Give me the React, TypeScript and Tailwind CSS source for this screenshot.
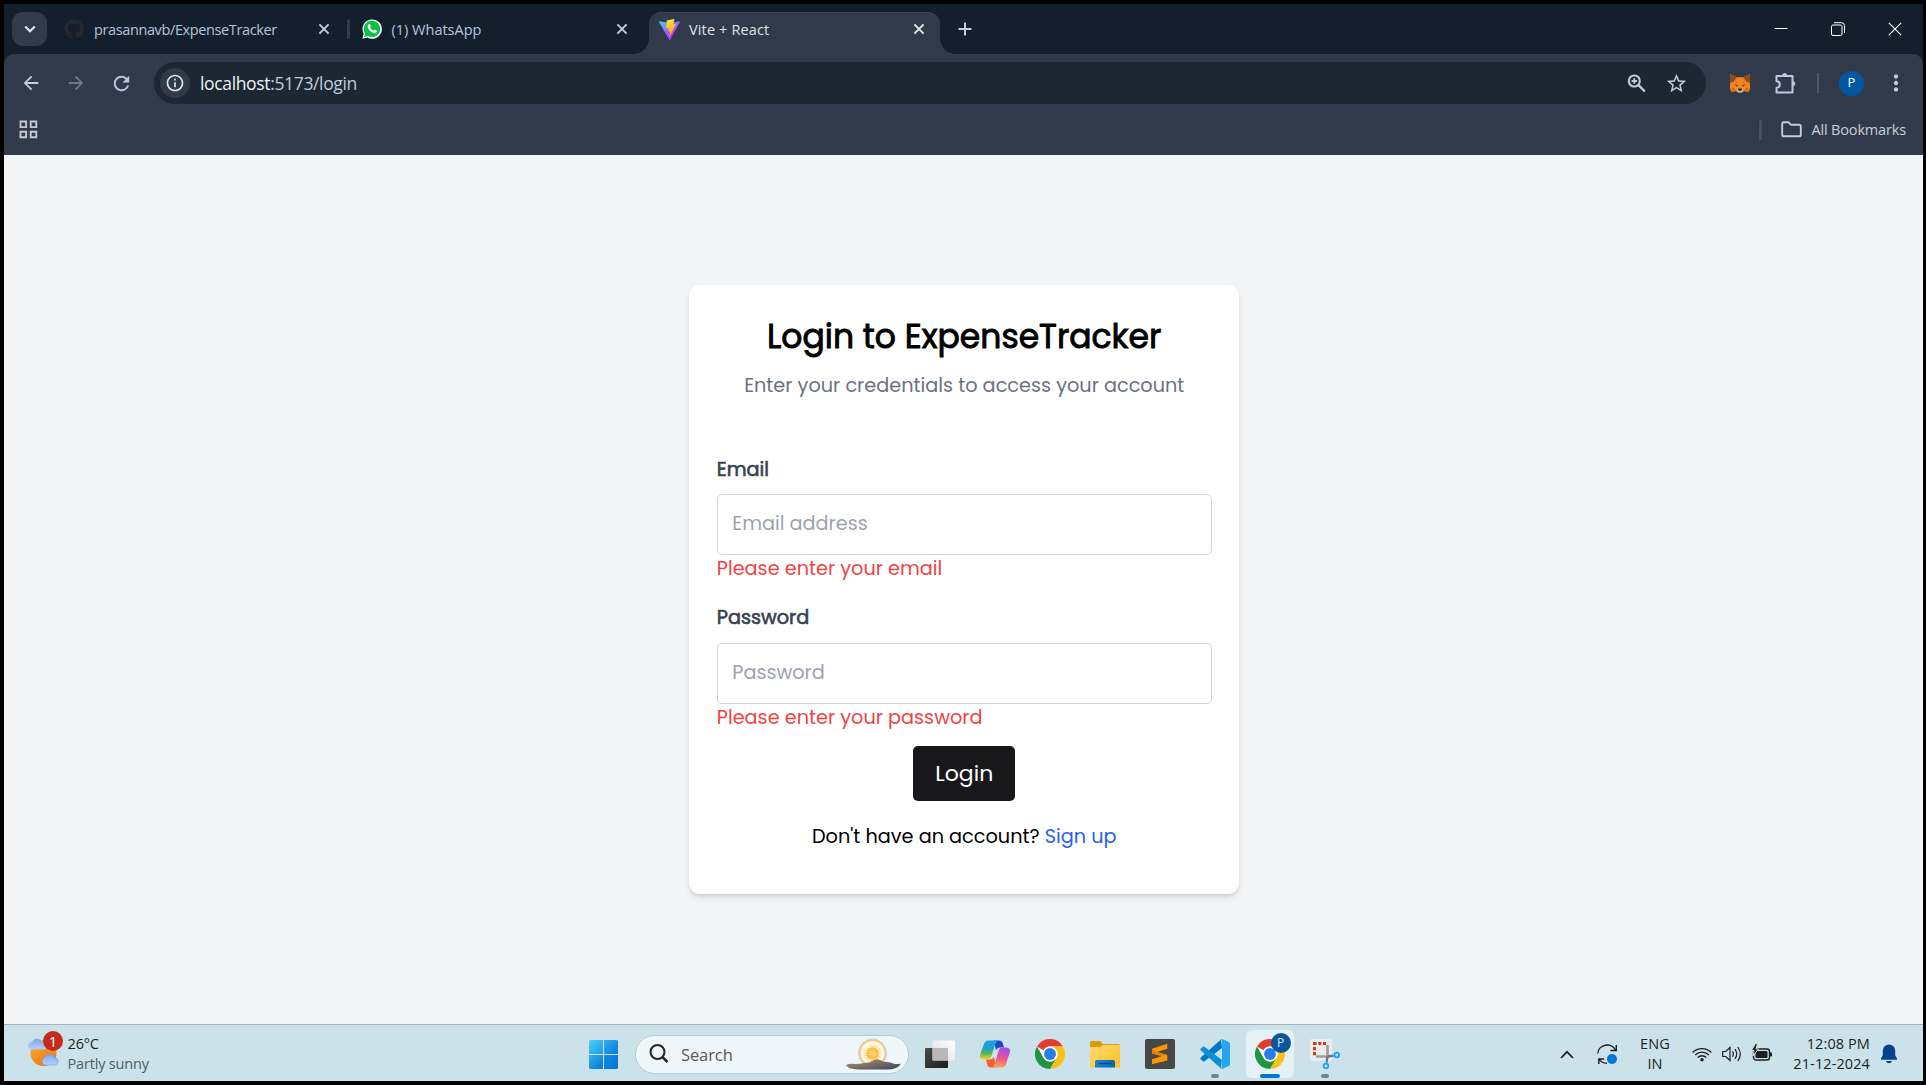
import React from "react";
import {
  MdArrowBack,
  MdArrowForward,
  MdRefresh,
  MdInfoOutline,
  MdStarBorder,
  MdMoreVert,
} from "react-icons/md";
import { FaGithub } from "react-icons/fa";

const CloseX = ({ color }: { color: string }) => (
  <svg className="size-4 shrink-0" viewBox="0 0 16 16" fill="none" stroke={color} strokeWidth="1.9">
    <path d="M3.4 3.4l9.2 9.2M12.6 3.4l-9.2 9.2" />
  </svg>
);

const ZoomInIcon = () => (
  <svg className="size-[23px]" viewBox="0 0 23 23" fill="none" stroke="#c6cad2" strokeWidth="2.100">
    <circle cx="9.300" cy="9" r="5.500" />
    <path d="M13.500 13.200l6.300 6.300" strokeWidth="2.400" />
    <path d="M9.300 6.200v5.600M6.500 9h5.600" strokeWidth="1.900" />
  </svg>
);

const WhatsAppIcon = () => (
  <svg className="size-5 shrink-0" viewBox="0 0 20 20">
    <path d="M.3 19.8l1.4-5A9.7 9.7 0 1 1 5.300 18.500z" fill="#f4fbf5" />
    <path d="M2 18.100l1.100-3.700A8.200 8.200 0 1 1 5.900 17z" fill="#0fc143" />
    <path
      d="M6.900 5.200c.5-.3 1-.1 1.200.3l.7 1.600c.1.300 0 .6-.7 1.400.8 1.500 1.900 2.500 3.500 3.200.6-.8.9-1.100 1.300-.9l1.700.8c.4.2.5.4.3 1-.3 1.100-1.400 1.700-2.400 1.600-3-.4-6.300-3.500-6.800-6.200-.200-1.200.4-2.400 1.200-2.800z"
      fill="#fff"
    />
  </svg>
);

const ViteIcon = () => (
  <svg className="size-[21px] shrink-0" viewBox="0 0 256 257">
    <defs>
      <linearGradient id="viteBody" x1="-.8%" x2="57.600%" y1="7.700%" y2="78.400%">
        <stop offset="0%" stopColor="#41D1FF" />
        <stop offset="100%" stopColor="#BD34FE" />
      </linearGradient>
      <linearGradient id="viteBolt" x1="43.400%" x2="50.300%" y1="2.200%" y2="89%">
        <stop offset="0%" stopColor="#FFEA83" />
        <stop offset="8.300%" stopColor="#FFDD35" />
        <stop offset="100%" stopColor="#FFA800" />
      </linearGradient>
    </defs>
    <path
      fill="url(#viteBody)"
      d="M255.153 37.938L134.897 252.976c-2.483 4.440-8.862 4.466-11.382.048L.875 37.958c-2.746-4.814 1.371-10.646 6.827-9.670l120.385 21.517a6.537 6.537 0 0 0 2.322-.004l117.867-21.483c5.438-.991 9.574 4.796 6.877 9.620z"
    />
    <path
      fill="url(#viteBolt)"
      d="M185.432.063L96.440 17.501a3.268 3.268 0 0 0-2.634 3.014l-5.474 92.456a3.268 3.268 0 0 0 3.997 3.378l24.777-5.718c2.318-.535 4.413 1.507 3.936 3.838l-7.361 36.047c-.495 2.426 1.782 4.500 4.151 3.780l15.304-4.649c2.372-.720 4.652 1.360 4.150 3.788l-11.698 56.621c-.732 3.542 3.979 5.473 5.943 2.437l1.313-2.028 72.516-144.720c1.215-2.423-.880-5.186-3.540-4.672l-25.505 4.922c-2.396.462-4.435-1.770-3.759-4.114l16.646-57.705c.677-2.350-1.370-4.583-3.769-4.113z"
    />
  </svg>
);

const FoxIcon = () => (
  <svg className="h-[20px] w-[22px]" viewBox="0 0 22 20">
    <path d="M1 .8l6.500 3.400h7L21 .8V15l-1.300 4-4.700-.8-2 1H9l-2-1-4.700.8L1 15z" fill="#f5841f" />
    <path d="M1 .8l6.500 3.400L5 8.500.9 10zM21 .8l-6.500 3.400L17 8.500l4.100 1.500z" fill="#8f4a1d" />
    <path d="M5 8.500l2.700-4L9 13l-3-2zM17 8.500l-2.700-4L13 13l3-2z" fill="#ed7a1c" />
    <path d="M5.500 11.500l3.200.8-.4 1.700zM16.500 11.500l-3.200.8.4 1.700z" fill="#5f3a25" />
    <path d="M1 15h4.800L7 17.500l-4.700 1.400zM21 15h-4.800L15 17.500l4.700 1.400z" fill="#e0701a" />
    <path d="M7.800 16.300l1.400-1h3.600l1.400 1-1 3.200H8.800z" fill="#cfc3b7" />
    <path d="M8.800 15.500h4.400l-.8 2.200H9.600z" fill="#1c1c22" />
  </svg>
);

const PuzzleIcon = () => (
  <svg className="size-[22px]" viewBox="0 0 22 22" fill="none" stroke="#b9cae2" strokeWidth="2" strokeLinejoin="round">
    <path d="M2.500 4h16v16.500h-16v-4.800c4.400 0 4.400-6.400 0-6.400z" />
    <path d="M8.500 3.500a2.200 2.200 0 0 1 4.400 0zM18.800 9.500a2.200 2.200 0 0 1 0 4.400z" fill="#b9cae2" strokeWidth="0.6" />
  </svg>
);

const FolderOutline = () => (
  <svg className="h-[17px] w-[21px]" viewBox="0 0 21 17" fill="none" stroke="#c6cad2" strokeWidth="1.900" strokeLinejoin="round">
    <path d="M1.200 2.800q0-1.600 1.600-1.600H7.500l2.300 2.500h8.400q1.600 0 1.600 1.600v8.400q0 1.600-1.600 1.600H2.800q-1.600 0-1.600-1.600z" />
  </svg>
);

const AppsIcon = () => (
  <svg className="size-[19px]" viewBox="0 0 19 19" fill="none" stroke="#c8c6d0" strokeWidth="1.900">
    <path d="M1.500 1.500h5.600v5.600H1.500zM11.700 1.500h5.600v5.600h-5.600zM1.500 11.700h5.600v5.600H1.500zM11.700 11.700h5.600v5.600h-5.600z" />
  </svg>
);

const WeatherIcon = () => (
  <svg className="size-8" viewBox="0 0 32 32">
    <defs>
      <linearGradient id="sunDisc" x1="0" y1="0" x2="0.600" y2="1">
        <stop offset="0" stopColor="#f5b62e" />
        <stop offset="1" stopColor="#f2761b" />
      </linearGradient>
      <linearGradient id="cloud" x1="0" y1="0" x2="0" y2="1">
        <stop offset="0" stopColor="#7fa6ee" />
        <stop offset="1" stopColor="#b5cffa" />
      </linearGradient>
    </defs>
    <circle cx="15.500" cy="16" r="13" fill="url(#sunDisc)" />
    <path d="M3.500 12.500a3.600 3.600 0 0 1 .4-7.200 5.500 5.500 0 0 1 10.200 0 3.600 3.600 0 0 1 1.900 7.200z" fill="url(#cloud)" />
    <path d="M16.500 28a4 4 0 0 1 .2-7.500 5.400 5.400 0 0 1 10 .3A3.700 3.700 0 0 1 27.500 28z" fill="url(#cloud)" stroke="#6b93e0" strokeWidth="0.600" />
  </svg>
);

const WindowsIcon = () => (
  <svg className="size-[29px]" viewBox="0 0 29 29">
    <defs>
      <linearGradient id="winPane" gradientUnits="userSpaceOnUse" x1="0" y1="0" x2="29" y2="29">
        <stop offset="0" stopColor="#4fd3fb" />
        <stop offset="0.600" stopColor="#0f87dc" />
        <stop offset="1" stopColor="#0274d3" />
      </linearGradient>
    </defs>
    <path d="M1.500 0H14v14H0V1.500Q0 0 1.500 0zM15 0h12.500Q29 0 29 1.500V14H15zM0 15h14v14H1.500Q0 29 0 27.500zM15 15h14v12.500q0 1.500-1.500 1.500H15z" fill="url(#winPane)" />
  </svg>
);

const SunriseArt = () => (
  <svg className="h-8 w-[55px]" viewBox="0 0 55 32">
    <defs>
      <linearGradient id="hill" x1="0" y1="0" x2="1" y2="1">
        <stop offset="0" stopColor="#8d8478" />
        <stop offset="0.400" stopColor="#8a7466" />
        <stop offset="1" stopColor="#2f4558" />
      </linearGradient>
      <radialGradient id="sunCore">
        <stop offset="0" stopColor="#ffe083" />
        <stop offset="1" stopColor="#ffb52e" />
      </radialGradient>
    </defs>
    <circle cx="26.500" cy="15" r="14" fill="#fdf6e9" stroke="#b9d3de" strokeWidth="1" />
    <circle cx="26.500" cy="15" r="12.700" fill="none" stroke="#fbc27a" strokeWidth="1.500" />
    <circle cx="26.500" cy="15.500" r="7.500" fill="none" stroke="#ffc65c" strokeWidth="2" strokeDasharray="1 1.600" />
    <circle cx="26.500" cy="15.500" r="6.200" fill="url(#sunCore)" />
    <path d="M0 27q4-2 9-1 5 0 9-1 6 0 10-3 3-1.500 6 0 3 2 7 2 4 0 6 1.500 5 1 8 0-3 6-14 6H12Q2 31 0 27z" fill="url(#hill)" />
  </svg>
);

const TaskViewIcon = () => (
  <svg className="size-[30px]" viewBox="0 0 30 30">
    <defs>
      <linearGradient id="tvDark" x1="0" y1="0" x2="1" y2="1">
        <stop offset="0" stopColor="#4b4b4b" />
        <stop offset="1" stopColor="#1c1c1c" />
      </linearGradient>
      <linearGradient id="tvLight" x1="0" y1="1" x2="1" y2="0">
        <stop offset="0" stopColor="#dcdcdc" />
        <stop offset="1" stopColor="#ffffff" />
      </linearGradient>
    </defs>
    <rect x="0" y="9" width="23" height="20" rx="1" fill="url(#tvDark)" />
    <rect x="7.500" y="1.500" width="22.500" height="20" rx="1" fill="url(#tvLight)" />
    <path d="M7.500 9H23v12.500H7.500z" fill="#b9b9b9" />
  </svg>
);

const CopilotIcon = () => (
  <svg className="size-[30px]" viewBox="0 0 30 30">
    <defs>
      <linearGradient id="copA" x1="0" y1="0" x2="0" y2="1">
        <stop offset="0" stopColor="#1b9df0" />
        <stop offset="0.400" stopColor="#1e9fc4" />
        <stop offset="0.700" stopColor="#5cb85a" />
        <stop offset="1" stopColor="#ffd21f" />
      </linearGradient>
      <linearGradient id="copB" x1="0.600" y1="0" x2="0.400" y2="1">
        <stop offset="0" stopColor="#9a4ff0" />
        <stop offset="0.500" stopColor="#ee4f9a" />
        <stop offset="1" stopColor="#ffa14f" />
      </linearGradient>
    </defs>
    <path d="M14 1.500h5q3 0 3.800 3L24 8.500h-4q-3 0-4 3z" fill="#1a45cf" />
    <path d="M16 28.500h-5q-3 0-3.800-3L6 20.500h4q3 0 4-3z" fill="#f0603a" />
    <path d="M8.500 1.500H18q-2 1-3 4.500l-3.500 11q-1 3.500-4 3.500H4q-5 0-3.800-5L4 5q1-3.500 4.500-3.500z" fill="url(#copA)" />
    <path d="M21.500 28.500H12q2-1 3-4.500l3.500-12q1-3.500 4-3.500H26q5 0 3.800 5L26 25q-1 3.500-4.500 3.500z" fill="url(#copB)" />
  </svg>
);

const ChromeIcon = () => (
  <svg className="size-[30px]" viewBox="0 0 48 48">
    <circle cx="24" cy="24" r="23.500" fill="#fff" />
    <path d="M3.200 12A24 24 0 0 1 44.800 12H24a12 12 0 0 0-10.400 6z" fill="#e33b2e" />
    <path d="M44.800 12A24 24 0 0 1 24 48l10.400-18A12 12 0 0 0 24 12z" fill="#fbc116" />
    <path d="M24 48A24 24 0 0 1 3.200 12l10.400 18A12 12 0 0 0 34.400 30z" fill="#229342" />
    <circle cx="24" cy="24" r="12" fill="#fff" />
    <circle cx="24" cy="24" r="9.500" fill="#2a7de9" />
  </svg>
);

const ExplorerIcon = () => (
  <svg className="size-[30px]" viewBox="0 0 30 30">
    <defs>
      <linearGradient id="folderFace" x1="0" y1="0" x2="1" y2="1">
        <stop offset="0" stopColor="#ffdb6e" />
        <stop offset="1" stopColor="#fcbf22" />
      </linearGradient>
      <linearGradient id="folderTray" x1="0" y1="0" x2="1" y2="0">
        <stop offset="0" stopColor="#1486d8" />
        <stop offset="1" stopColor="#0a66b4" />
      </linearGradient>
    </defs>
    <path d="M0 3.500Q0 2 1.500 2H10l3 3h15.500Q30 5 30 6.500V12H0z" fill="#dd9a0d" />
    <path d="M0 8h10l3-2h17v21.500q0 1-1 1H1q-1 0-1-1z" fill="url(#folderFace)" />
    <path d="M5 28.500V23q0-2 2-2h16q2 0 2 2v5.500z" fill="url(#folderTray)" />
    <path d="M8.500 24.500h13" stroke="#064a85" strokeWidth="1.200" />
  </svg>
);

const SublimeIcon = () => (
  <svg className="size-[30px]" viewBox="0 0 30 30">
    <rect width="30" height="30" rx="2" fill="#484848" />
    <path d="M7 9.800l15.300-5v5L12 13l10.300 3.100v5.300L7 25.300v-5L17.300 17 7 14.500z" fill="#ff9800" />
    <path d="M7 14.500v-4.700L12 13l10.300 3.100-5 .9z" fill="#e68200" />
  </svg>
);

const VSCodeIcon = () => (
  <svg className="size-[30px]" viewBox="0 0 30 30">
    <path d="M22 9L4.500 22.300q-.8.600-1.500 0L.8 20.500q-.9-.9 0-1.900L21 .4z" fill="#0078c4" />
    <path d="M22 21L4.500 7.700q-.8-.6-1.500 0L.8 9.500q-.9.900 0 1.900L21 29.600z" fill="#0c8fd8" />
    <path d="M22 0l7 3.100q1 .5 1 1.700v20.400q0 1.200-1 1.700L22 30q-1 .2-1.700-.6 1.700 1 1.700-1.400V2Q22-.3 20.300.6 21-.2 22 0z" fill="#27a4f2" />
  </svg>
);

const SnipIcon = () => (
  <svg className="size-[30px]" viewBox="0 0 30 30">
    <rect x="0" y="0" width="22" height="22" rx="2" fill="#ececee" />
    <path d="M3 3h3.600v3H3zM8.300 3h3v3h-3zM13 3h3v3h-3zM3 8h3v3.300H3zM3 13h3v3.300H3z" fill="#d43d10" />
    <path d="M17.500 6v11M6 17.500h11" stroke="#9a9da1" strokeWidth="2.600" />
    <path d="M17.500 17.500l-.8 5M17.500 17.500l5.500-.8" stroke="#6f757b" strokeWidth="2.400" />
    <circle cx="26.800" cy="16" r="2.300" fill="none" stroke="#1da4e8" strokeWidth="1.800" />
    <circle cx="16" cy="27" r="2.300" fill="none" stroke="#1da4e8" strokeWidth="1.800" />
    <path d="M22 17l3-.5M17 22l-.5 3" stroke="#1da4e8" strokeWidth="1.800" />
  </svg>
);

const TabStrip = () => (
  <div className="flex h-[50px] items-center pl-2">
    <div className="flex h-[34px] w-[35px] items-center justify-center rounded-[11px] bg-[#303b4b]">
      <svg className="size-3" viewBox="0 0 12 12" fill="none" stroke="#e3e6ee" strokeWidth="2.200">
        <path d="M1.200 3.500L6 8.200l4.800-4.700" />
      </svg>
    </div>
    <div className="ml-[17px] flex w-[268px] items-center">
      <FaGithub className="size-5 text-[#25292e]" />
      <span className="ml-2.5 flex-1 pt-px tracking-[-0.380px]">prasannavb/ExpenseTracker</span>
      <CloseX color="#c3cfe0" />
    </div>
    <div className="ml-[15px] h-5 w-[3px] rounded-full bg-[#303b4b]" />
    <div className="ml-3 flex w-[268px] items-center">
      <WhatsAppIcon />
      <span className="ml-[9.500px] flex-1 pt-px">(1) WhatsApp</span>
      <CloseX color="#c3cfe0" />
    </div>
    <div className="ml-1 size-[15px] self-end bg-[radial-gradient(circle_at_top_left,#141f2e_14.500px,#303a4a_15px)]" />
    <div className="flex h-[42px] w-[291px] items-center self-end rounded-t-xl border-t border-[#3a4454] bg-[#303a4a] pr-[13px] pb-[9px] pl-2.5">
      <ViteIcon />
      <span className="ml-[9px] flex-1 pt-px tracking-[0.140px] text-[#dfe2e8]">Vite + React</span>
      <CloseX color="#e6e8ec" />
    </div>
    <div className="size-[15px] self-end bg-[radial-gradient(circle_at_top_right,#141f2e_14.500px,#303a4a_15px)]" />
    <svg className="size-5" viewBox="0 0 20 20" stroke="#c3cfe0" strokeWidth="2">
      <path d="M10 3.500v13M3.500 10h13" />
    </svg>
    <div className="ml-auto flex items-center gap-[43px] pr-[20.500px]">
      <svg className="h-[14px] w-[14px]" viewBox="0 0 14 14" stroke="#fff" strokeWidth="1">
        <path d="M.5 6.500h13" />
      </svg>
      <svg className="h-[14px] w-[14px]" viewBox="0 0 14 14" fill="none" stroke="#fff" strokeWidth="1">
        <rect x="0.500" y="3" width="10.500" height="10.500" rx="1.500" />
        <path d="M3 .7h7.500q3 0 3 3V11" />
      </svg>
      <svg className="h-[14px] w-[14px]" viewBox="0 0 14 14" stroke="#fff" strokeWidth="1.100">
        <path d="M.8.800l12.400 12.400M13.200.800L.8 13.200" />
      </svg>
    </div>
  </div>
);

const Toolbar = () => (
  <div className="h-[101px] rounded-t-[10px] bg-[#303a4a]">
    <div className="flex items-center pt-2">
      <MdArrowBack className="ml-4 size-[22px] text-[#bccbe2]" />
      <MdArrowForward className="ml-[23px] size-[22px] text-[#6d7889]" />
      <MdRefresh className="ml-[23px] size-[23px] text-[#bccbe2]" />
      <div className="ml-[21px] flex h-[42px] w-[1552px] items-center rounded-full bg-[#1b2733] pr-[18px] pl-1.5">
        <div className="flex size-[30px] items-center justify-center rounded-full bg-[#303a4a]">
          <MdInfoOutline className="size-5 text-[#e3e5ea]" />
        </div>
        <span className="ml-2.5 flex-1 pt-px text-[17.500px] tracking-[-0.350px] text-[#c0cbdb]">
          <span className="text-[#eef1f5]">localhost</span>:5173/login
        </span>
        <ZoomInIcon />
        <MdStarBorder className="ml-[17px] size-[23px] text-[#c6cad2]" />
      </div>
      <div className="ml-[22.500px]">
        <FoxIcon />
      </div>
      <div className="ml-[23.500px]">
        <PuzzleIcon />
      </div>
      <div className="ml-[21px] h-5 w-0.5 bg-[#4a586b]" />
      <div className="ml-5 flex size-[25px] items-center justify-center rounded-full bg-[#0058a3] text-[13px] text-white">P</div>
      <MdMoreVert className="ml-[19px] size-[26px] text-[#bccbe2]" />
    </div>
    <div className="flex h-[51px] items-center pr-[16.500px] pl-[15px]">
      <AppsIcon />
      <div className="ml-auto h-5 w-[3px] rounded-full bg-[#455062]" />
      <div className="ml-[19px]">
        <FolderOutline />
      </div>
      <span className="ml-[9.500px] tracking-[-0.160px] text-[#cbd0d8]">All Bookmarks</span>
    </div>
  </div>
);

const LoginCard = () => (
  <div className="h-[609px] w-[550px] rounded-[11px] bg-white px-[27.500px] pt-7 font-[Poppins,Inter,sans-serif] text-[19.250px] shadow-[0_4px_7px_-1px_rgba(0,0,0,0.120),0_2px_4px_-2px_rgba(0,0,0,0.120)]">
    <h1 className="text-center text-[33px] leading-[48px] text-black [-webkit-text-stroke:0.900px_#000]">Login to ExpenseTracker</h1>
    <p className="mt-[11px] text-center leading-7 text-[#6b7280]">Enter your credentials to access your account</p>
    <div className="mt-14 leading-7 text-[#374151] [-webkit-text-stroke:0.600px_#374151]">Email</div>
    <div className="mt-2.5 flex h-[61px] items-center rounded-[5px] border border-[#d1d5db] pl-[14.500px] text-[#9ca3af]">
      Email address
    </div>
    <p className="pt-px leading-[26px] text-[#ef4444]">Please enter your email</p>
    <div className="mt-[22px] leading-7 text-[#374151] [-webkit-text-stroke:0.600px_#374151]">Password</div>
    <div className="mt-[11px] flex h-[61px] items-center rounded-[5px] border border-[#d1d5db] pl-[14.500px] text-[#9ca3af]">
      Password
    </div>
    <p className="pt-px leading-[26px] text-[#ef4444]">Please enter your password</p>
    <button className="mx-auto mt-[15px] block h-[55px] w-[102px] rounded-[5px] bg-[#18181b] text-[22px] text-white">Login</button>
    <p className="mt-[22px] text-center leading-7 text-black">
      Don't have an account? <span className="text-[#2563eb]">Sign up</span>
    </p>
  </div>
);

const TaskItem = ({ children, running }: { children: React.ReactNode; running?: boolean }) => (
  <div className="relative flex h-12 w-[55px] items-center justify-center">
    {children}
    {running && <div className="absolute bottom-0 h-1 w-2 rounded-full bg-[#75828a]" />}
  </div>
);

const Taskbar = () => (
  <div className="flex h-[57px] items-center border-t border-[#a3b3bb] bg-[#cbe2ea] pt-0.5 text-[#1b1f22]">
    <div className="flex w-[585px] items-center pl-[24px]">
      <div className="relative -mt-0.5">
        <WeatherIcon />
        <div className="absolute -top-1.5 left-[15px] flex size-5 items-center justify-center rounded-full bg-[#c42b1c] text-[14px] text-white">1</div>
      </div>
      <div className="ml-[7.500px] leading-5">
        <div className="tracking-[-0.150px]">26°C</div>
        <div className="tracking-[-0.180px] text-[#4e5c62]">Partly sunny</div>
      </div>
    </div>
    <WindowsIcon />
    <div className="ml-[17px] flex h-[39px] w-[274px] items-center rounded-full border border-[#b4cbd4] bg-[#eff6f9] pr-[7px] pl-[13px]">
      <svg className="size-5" viewBox="0 0 20 20" fill="none" stroke="#222629" strokeWidth="2">
        <circle cx="8.500" cy="8" r="7" />
        <path d="M13.500 13l5 5.200" strokeWidth="2.600" />
      </svg>
      <span className="ml-3 flex-1 pt-0.5 text-[16.500px] tracking-[-0.100px] text-[#54595d]">Search</span>
      <SunriseArt />
    </div>
    <div className="ml-[3px] flex">
      <TaskItem><TaskViewIcon /></TaskItem>
      <TaskItem><CopilotIcon /></TaskItem>
      <TaskItem><ChromeIcon /></TaskItem>
      <TaskItem><ExplorerIcon /></TaskItem>
      <TaskItem><SublimeIcon /></TaskItem>
      <TaskItem running><VSCodeIcon /></TaskItem>
      <div className="relative mx-[3.500px] flex size-12 items-center justify-center rounded-md bg-[#e5f1f6]">
        <ChromeIcon />
        <div className="absolute top-[3px] right-[3px] flex size-5 items-center justify-center rounded-full bg-[#0b569c] text-[12px] text-[#d5e6f5]">P</div>
        <div className="absolute bottom-0 h-1 w-5 rounded-full bg-[#0078d4]" />
      </div>
      <TaskItem running><SnipIcon /></TaskItem>
    </div>
    <div className="ml-auto flex items-center pr-[25.500px]">
      <svg className="h-[9px] w-[14px]" viewBox="0 0 14 9" fill="none" stroke="#1b1f22" strokeWidth="1.700">
        <path d="M1 8l6-6.200L13 8" />
      </svg>
      <svg className="ml-[23px] size-5" viewBox="0 0 20 20" fill="none" stroke="#1b1f22" strokeWidth="1.400">
        <path d="M.8 9.500A9.300 8.700 0 0 1 18.500 6M19.300 1v5.500H13.500M1.800 20v-5h5.400M2.300 15.500Q4.500 19 10 19.300" />
        <circle cx="15" cy="15" r="5" fill="#0078d7" stroke="none" />
      </svg>
      <div className="ml-[18px] w-10 text-center leading-5">
        <div className="tracking-[0.200px]">ENG</div>
        <div>IN</div>
      </div>
      <svg className="ml-[17px] h-4 w-5" viewBox="0 0 20 16" fill="none" stroke="#1b1f22" strokeWidth="1.300">
        <path d="M.7 6.500a13 13 0 0 1 18.600 0M3.200 9a9.600 9.600 0 0 1 13.600 0M5.700 11.500a6.200 6.200 0 0 1 8.600 0" />
        <circle cx="10" cy="13.800" r="1.700" fill="#1b1f22" stroke="none" />
      </svg>
      <svg className="ml-2.5 h-[18px] w-5" viewBox="0 0 20 18" fill="none" stroke="#1b1f22" strokeWidth="1.200">
        <path d="M.7 6.500v5h3l4.300 4V2.500l-4.300 4zM10.500 6.300q1.800 2.700 0 5.400M13 4.200q3.400 4.800 0 9.600M15.800 2q5 7 0 14" />
      </svg>
      <svg className="ml-2.5 h-[18px] w-5 overflow-visible" viewBox="0 0 20 18">
        <rect x="1.500" y="4" width="16" height="11" rx="2.500" fill="none" stroke="#1b1f22" strokeWidth="1.400" />
        <rect x="3.500" y="6" width="12" height="7" rx="1" fill="#1b1f22" />
        <path d="M18 7.500h1.300q.7 0 .7.700v2.600q0 .7-.7.700H18z" fill="#1b1f22" />
        <path d="M3.500-1.500L-.5 5.500H2L1 11l5.500-7H4l1.500-5.500z" fill="#1b1f22" stroke="#cbe2ea" strokeWidth="1" />
      </svg>
      <div className="w-[98px] text-right leading-5 tracking-[0.100px]">
        <div>12:08 PM</div>
        <div>21-12-2024</div>
      </div>
      <svg className="ml-[11px] h-5 w-4" viewBox="0 0 16 20">
        <path d="M8 .5a6.200 6.200 0 0 1 6.200 6.200v4.500L16 14.500v1.200H0v-1.200l1.800-3.300V6.700A6.200 6.200 0 0 1 8 .5z" fill="#06418f" />
        <path d="M5 17h6q-.8 2.300-3 2.300T5 17z" fill="#06418f" />
      </svg>
    </div>
  </div>
);

export default function App() {
  return (
    <div className="h-[1085px] w-[1926px] overflow-hidden bg-black pt-1 pl-1 font-['Segoe_UI','Open_Sans',sans-serif] text-[14.500px]">
      <div className="flex h-[1077px] w-[1918.500px] flex-col">
        <div className="bg-[#141f2e] text-[#b6c4d8]">
          <TabStrip />
          <Toolbar />
        </div>
        <main className="flex flex-1 justify-center bg-[#f3f4f6] pt-[130px] pl-[2px]">
          <LoginCard />
        </main>
        <Taskbar />
      </div>
    </div>
  );
}
